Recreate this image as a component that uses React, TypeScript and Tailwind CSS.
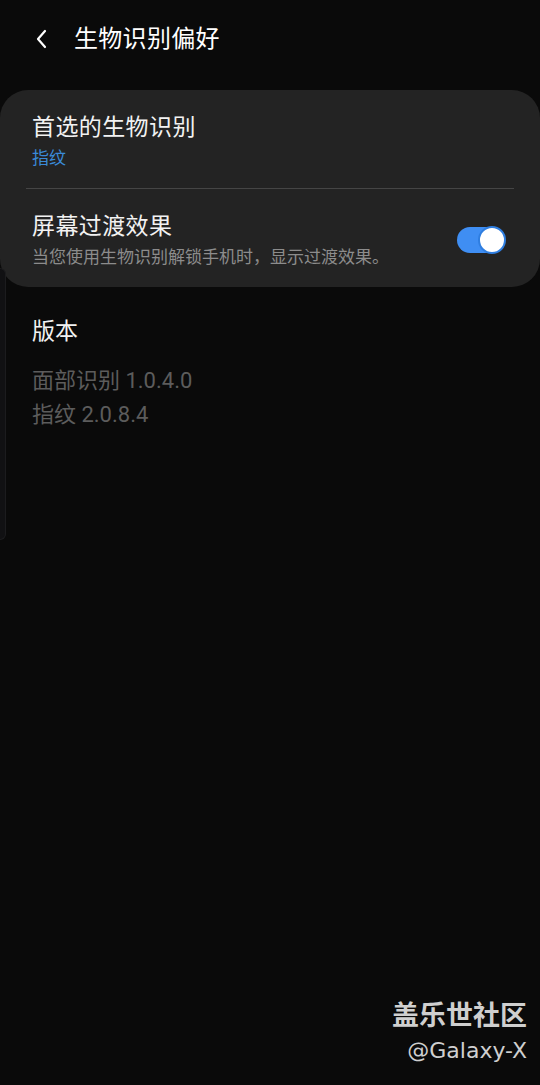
import React from 'react';

const font = { fontFamily: '"Roboto", "Noto Sans CJK SC", sans-serif' };

export default function App() {
  return (
    <div className="relative w-[540px] h-[1085px] bg-[#0a0a0a] overflow-hidden text-white" style={font}>
      {/* Edge panel handle */}
      <div className="absolute left-0 top-[268px] w-[6px] h-[272px] rounded-r-[6px] bg-[#111113] border border-l-0 border-[#1c1c1e]" />

      {/* Header */}
      <div className="flex items-center h-[78px] pl-[30px]">
        <svg width="24" height="24" viewBox="0 0 24 24" fill="none" stroke="#fff" strokeWidth="2.2" strokeLinecap="round" strokeLinejoin="round">
          <path d="M15 4 L8 12 L15 20" />
        </svg>
        <span className="ml-[20px] text-[24px] leading-none tracking-[0.3px]">生物识别偏好</span>
      </div>

      {/* Card */}
      <div className="mt-[12px] rounded-[28px] bg-[#232323]">
        <div className="px-[32px] pt-[22px] pb-[19px]">
          <div className="text-[23px] leading-[32px] text-[#f2f2f2] tracking-[0.4px]">首选的生物识别</div>
          <div className="mt-[3px] text-[17px] leading-[22px] text-[#3a8ad8]">指纹</div>
        </div>
        <div className="mx-[26px] h-px bg-[#454545]" />
        <div className="flex items-center justify-between pl-[32px] pr-[35px] pt-[22px] pb-[18px]">
          <div>
            <div className="text-[23px] leading-[32px] text-[#f2f2f2] tracking-[0.4px]">屏幕过渡效果</div>
            <div className="mt-[2px] text-[17px] leading-[24px] text-[#8c8c8c]">当您使用生物识别解锁手机时，显示过渡效果。</div>
          </div>
          <div className="relative w-[48px] h-[26px] rounded-full bg-[#3f8ef3]">
            <div className="absolute right-[-1px] top-[-1px] w-[28px] h-[28px] rounded-full bg-white border-[2px] border-[#2f7ee0]" />
          </div>
        </div>
      </div>

      {/* Version */}
      <div className="px-[32px] pt-[29px]">
        <div className="text-[23px] leading-[32px] text-[#f2f2f2]">版本</div>
        <div className="mt-[16px] text-[22px] leading-[34px] text-[#5c5c5c]">
          <div>面部识别 1.0.4.0</div>
          <div>指纹 2.0.8.4</div>
        </div>
      </div>

      {/* Watermark */}
      <div className="absolute right-[13px] top-[997px] flex flex-col items-end text-[#cfcfcf]">
        <div className="text-[27px] leading-[38px] font-bold">盖乐世社区</div>
        <div className="text-[22px] leading-[32px]" style={{ fontFamily: '"DejaVu Sans", sans-serif' }}>@Galaxy-X</div>
      </div>
    </div>
  );
}
